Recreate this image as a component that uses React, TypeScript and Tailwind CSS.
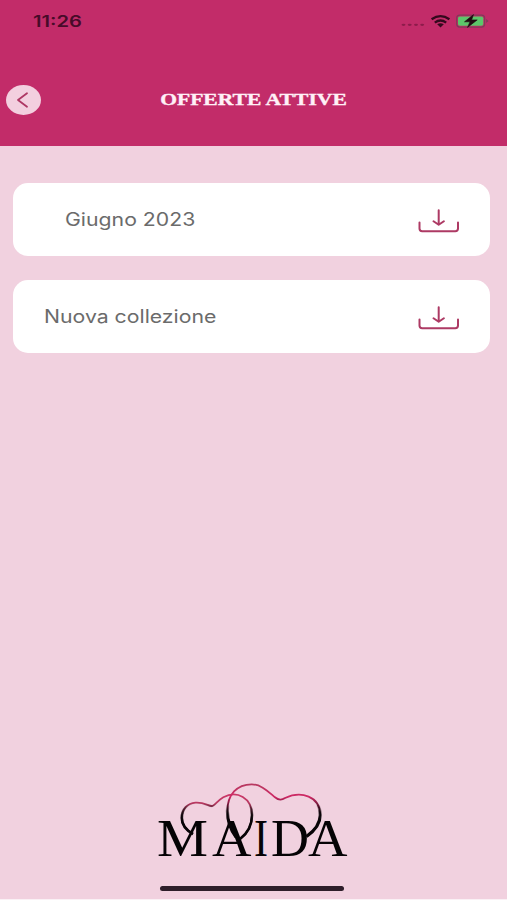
import React from "react";

function StatusIcons() {
  return (
    <svg className="mb-[3px] h-5 w-[92px]" viewBox="0 0 92 20" fill="none">
      <g fill="#8d1c4b">
        <ellipse cx="5.5" cy="14.8" rx="2" ry="1.1" />
        <ellipse cx="11.7" cy="14.8" rx="2" ry="1.1" />
        <ellipse cx="18" cy="14.8" rx="2" ry="1.1" />
        <ellipse cx="24.2" cy="14.8" rx="2" ry="1.1" />
      </g>
      <g stroke="#34091d" strokeWidth="2.3">
        <path d="M33.6 9.2Q42.5 3 51.4 9.2" />
        <path d="M36.8 12.6Q42.5 8.4 48.2 12.6" />
      </g>
      <path d="M39.2 14.3Q42.5 12.1 45.8 14.3L42.5 17.4Z" fill="#34091d" />
      <rect x="58.7" y="5.1" width="27.9" height="12" rx="3" stroke="#84385a" strokeWidth="1.3" />
      <rect x="60" y="6.4" width="25.3" height="9.4" rx="1.8" fill="#5cc66a" />
      <path d="M88.2 9L90.6 11L88.2 13Z" fill="#84385a" />
      <path d="M75.5 4.6L66.5 11.8H72L69.5 17.4L79.2 9.9H73.6Z" fill="#200c12" stroke="#200c12" strokeWidth=".6" />
    </svg>
  );
}

function DownloadIcon() {
  return (
    <svg
      className="mt-1 h-6 w-[42px]"
      viewBox="0 0 42 24"
      fill="none"
      stroke="#ad3a64"
      strokeWidth="2"
      strokeLinecap="round"
      strokeLinejoin="round"
    >
      <path d="M20.7 1.2V15.6M15.5 12.2L20.7 15.8L25.9 12.2" />
      <path d="M1.5 13.4V19.5Q1.5 22.2 4.2 22.2H37.3Q40 22.2 40 19.5V13.4" />
    </svg>
  );
}

function Offer({ label, indent }: { label: string; indent: string }) {
  return (
    <button className={`flex h-[73px] w-full items-center justify-between rounded-[15px] bg-white pr-[30px] ${indent}`}>
      <span className="mt-0.5 origin-left scale-x-[1.18] whitespace-nowrap text-[18px] leading-6 text-[#6b6b6b]">{label}</span>
      <DownloadIcon />
    </button>
  );
}

const LEFT_HEART =
  "M41 54C33 49.5 29.8 44.5 29.8 38C29.8 29 35.5 23.2 43.5 22.6C52 22 56.5 26 59.7 26C62.5 26 65 21 71.3 17.3C85 9.8 100 18 100 35C100 44.5 96 53 88 59";
const RIGHT_HEART =
  "M84 57C78 49 75.4 41 75.4 31C75.4 14.5 85 4.3 99.7 4.3C109 4.3 116 11.5 123 17.3Q128 21.5 133 18C149 10.5 168.2 16 168.2 35C168.2 44 163 50.5 154.5 56.5";

function Logo() {
  return (
    <svg className="h-[92px] w-[200px] overflow-visible" viewBox="0 0 200 92" fill="none" role="img" aria-label="Maida">
      <defs>
        <linearGradient id="left" gradientUnits="userSpaceOnUse" x1="0" y1="15" x2="0" y2="38">
          <stop stopColor="#cb3768" />
          <stop offset=".35" stopColor="#b83961" />
          <stop offset="1" stopColor="#080407" />
        </linearGradient>
        <linearGradient id="right" gradientUnits="userSpaceOnUse" x1="0" y1="5" x2="0" y2="34">
          <stop stopColor="#b83961" />
          <stop offset=".4" stopColor="#cf2865" />
          <stop offset="1" stopColor="#080407" />
        </linearGradient>
        <linearGradient id="shade" gradientUnits="userSpaceOnUse" x1="0" y1="24" x2="0" y2="40">
          <stop stopColor="#080407" stopOpacity="0" />
          <stop offset="1" stopColor="#080407" />
        </linearGradient>
      </defs>
      <g fill="#050305" fontSize="52" fontFamily="'Liberation Serif', serif">
        <text x="5" y="75.5" textLength="51" lengthAdjust="spacingAndGlyphs">M</text>
        <text x="60" y="75.5" textLength="39.5" lengthAdjust="spacingAndGlyphs">A</text>
        <text x="102" y="75.5" textLength="14" lengthAdjust="spacingAndGlyphs">I</text>
        <text x="119" y="75.5" textLength="38" lengthAdjust="spacingAndGlyphs">D</text>
        <text x="156" y="75.5" textLength="39.5" lengthAdjust="spacingAndGlyphs">A</text>
      </g>
      <path d={LEFT_HEART} stroke="url(#left)" strokeWidth="1.8" />
      <path d={RIGHT_HEART} stroke="url(#right)" strokeWidth="1.8" />
      <path d={LEFT_HEART} stroke="url(#shade)" strokeWidth="2.7" />
      <path d={RIGHT_HEART} stroke="url(#shade)" strokeWidth="3.2" />
    </svg>
  );
}

export default function App() {
  return (
    <div className="flex h-[900px] w-[507px] flex-col overflow-hidden border-b border-[#faf1f5] bg-[#f1d1df] font-['Inter',sans-serif]">
      <header className="h-[146px] shrink-0 bg-[#c22c69]">
        <div className="flex h-[42px] items-center justify-between pl-[33px] pr-[17px]">
          <time className="mt-0.5 origin-left scale-x-[1.3] text-[15.5px] font-semibold leading-5 text-[#480b29]">11:26</time>
          <StatusIcons />
        </div>
        <div className="grid grid-cols-[48px_1fr_48px] items-center pt-[43px]">
          <button aria-label="Indietro" className="ml-1.5 flex h-[30px] w-[35px] items-center justify-center rounded-[50%] bg-[#f3cfdf]">
            <svg className="h-[30px] w-[35px]" viewBox="0 0 35 30" fill="none" stroke="#ae3764" strokeWidth="1.8" strokeLinecap="round" strokeLinejoin="round">
              <path d="M21 8.3L12 15L21 21.8" />
            </svg>
          </button>
          <h1 className="scale-x-[1.27] whitespace-nowrap text-center font-['Liberation_Serif',serif] text-[17px] font-bold leading-5 text-[#fff1f7] [-webkit-text-stroke:0.35px_#fff1f7]">
            OFFERTE ATTIVE
          </h1>
        </div>
      </header>
      <main className="flex flex-1 flex-col gap-6 pl-[12.5px] pr-[17px] pt-[36.5px]">
        <Offer label="Giugno 2023" indent="pl-[52px]" />
        <Offer label="Nuova collezione" indent="pl-[31px]" />
      </main>
      <footer className="flex flex-col items-center pb-2 pr-[3px]">
        <Logo />
        <div className="mt-3.5 h-[5px] w-[184px] rounded-full bg-[#2e1e2a]" />
      </footer>
    </div>
  );
}
